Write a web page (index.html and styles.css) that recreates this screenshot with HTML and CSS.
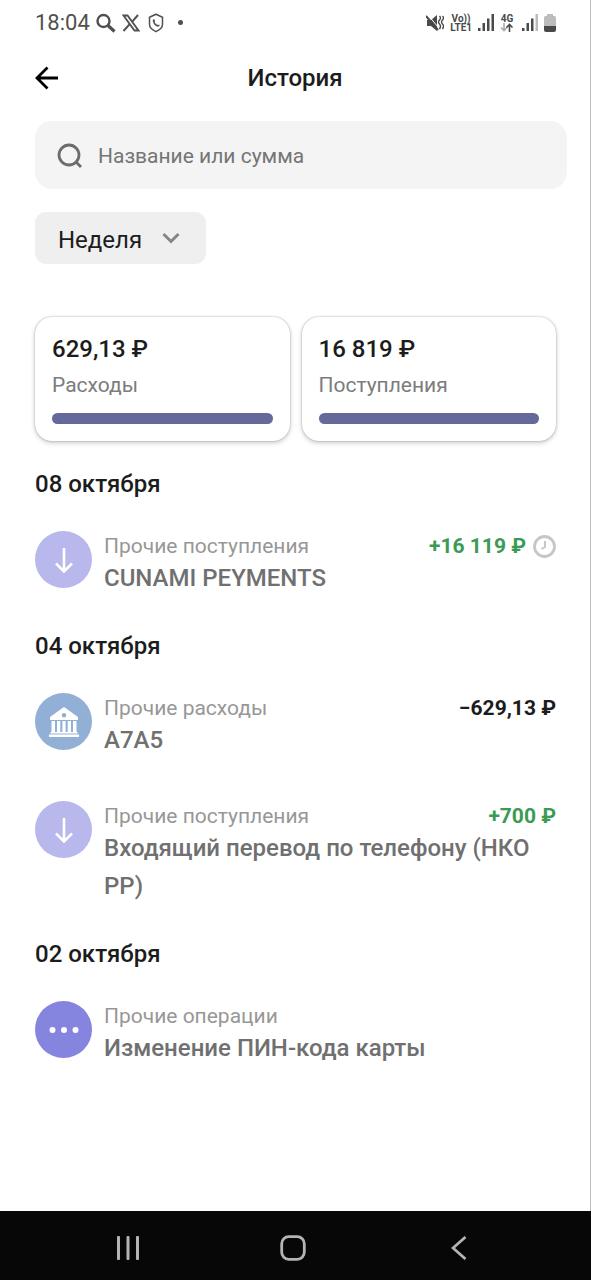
FILE: index.html
```html
<!DOCTYPE html>
<html lang="ru">
<head>
<meta charset="utf-8">
<meta name="viewport" content="width=device-width, initial-scale=1">
<title>История</title>
<link rel="stylesheet" href="styles.css">
</head>
<body>
<div class="screen">
  <div class="status">
    <div class="status-group">
      <span class="clock">18:04</span>
      <svg width="20" height="20" viewBox="0 0 20 20" fill="none" stroke="#505050"><circle cx="7.5" cy="8" r="6" stroke-width="2.4"/><path d="M12 12.5l6.500 6" stroke-width="3.200"/></svg>
      <svg width="18" height="18" viewBox="0 0 18 18" fill="none" stroke="#505050"><path d="M1.500 1.500h4l11 15h-4z" stroke-width="1.800"/><path d="M16 1L10 7.800M7.700 10.200L1.500 17" stroke-width="2"/></svg>
      <svg class="shield" width="16" height="20" viewBox="0 0 16 20" fill="none" stroke="#505050" stroke-width="1.500"><path d="M8 1.200l6.500 3v7.300c0 3-3 5.500-6.500 7.200-3.500-1.700-6.500-4.200-6.500-7.200V4.200z"/><path d="M5.700 7c0 3.500 1.800 5.500 4.600 5.900" stroke-width="1.500"/><path d="M5.800 6.400v2.200M10.500 11.700v1.600" stroke-width="2"/></svg>
      <span class="dot"></span>
    </div>
    <div class="status-group status-right">
      <svg width="18" height="18" viewBox="0 0 18 18"><path d="M1 6h4l6-5v16l-6-5H1z" fill="#4a4a4a"/><path d="M2 1l10 12" stroke="#fff" stroke-width="1"/><path d="M0 2l12 14" stroke="#4a4a4a" stroke-width="2"/><path d="M13.500 2q2 2 0 4t0 4 0 5M16.500 2q2 2 0 4t0 4 0 5" fill="none" stroke="#4a4a4a" stroke-width="1.400"/></svg>
      <span class="net"><span>Vo))</span><span>LTE1</span></span>
      <svg width="16" height="17" viewBox="0 0 16 17" fill="#4a4a4a"><path d="M0 14h2.500v3H0zM4.500 9H7v8H4.500zM9 4.500h2.500V17H9zM13.500 0H16v17h-2.500z"/></svg>
      <span class="net net-4g"><span>4G</span><svg width="14" height="9" viewBox="0 0 14 9" fill="none" stroke-width="1.600"><path d="M4 0v7M1 4.500l3 3 3-3" stroke="#aaa"/><path d="M9.500 9V1.500M6.500 4.500l3-3 3 3" stroke="#4a4a4a"/></svg></span>
      <svg width="16" height="17" viewBox="0 0 16 17" fill="#4a4a4a"><path d="M0 14h2.500v3H0zM4.500 9H7v8H4.500zM9 4.500h2.500V17H9z"/><path d="M13.500 0H16v17h-2.500z" fill="#bbb"/></svg>
      <svg width="12" height="18" viewBox="0 0 12 18"><path d="M3 0h6v2h1.500Q12 2 12 4v9H0V4q0-2 1.500-2H3z" fill="#bcbcbc"/><path d="M0 12h12v4q0 2-2 2H2q-2 0-2-2z" fill="#4a4a4a"/></svg>
    </div>
  </div>

  <header class="header">
    <button class="back" type="button" aria-label="Назад"><svg width="24" height="24" viewBox="0 0 24 24" fill="none" stroke="#000" stroke-width="2.800"><path d="M23 12H2M12.500 1.500L2 12l10.500 10.500"/></svg></button>
    <h1 class="title">История</h1>
  </header>

  <main class="main">
    <label class="search">
      <svg width="26" height="26" viewBox="0 0 26 26" fill="none" stroke="#6c6c6c" stroke-width="2.800"><circle cx="12" cy="12" r="10"/><path d="M19 19l5 5"/></svg>
      <input class="search-input" type="text" placeholder="Название или сумма" aria-label="Название или сумма">
    </label>

    <div class="period">
      <select class="period-select" aria-label="Период"><option>Неделя</option></select>
      <svg class="chevron" width="18" height="12" viewBox="0 0 18 12" fill="none" stroke="#858585" stroke-width="3"><path d="M1.500 2L9 9.500 16.500 2"/></svg>
    </div>

    <div class="cards">
      <section class="card"><div class="card-sum">629,13 ₽</div><div class="card-label">Расходы</div><div class="bar"></div></section>
      <section class="card"><div class="card-sum">16 819 ₽</div><div class="card-label">Поступления</div><div class="bar"></div></section>
    </div>

    <section class="day">
      <h2 class="date">08 октября</h2>
      <article class="row">
        <span class="badge badge-in"><svg width="20" height="26" viewBox="0 0 20 26" fill="none" stroke="#fff" stroke-width="2.600"><path d="M10 1v23M2 16.500l8 8 8-8"/></svg></span>
        <div class="info">
          <div class="line"><span class="kind">Прочие поступления</span><span class="amount plus">+16 119 ₽ <svg width="23" height="23" viewBox="0 0 23 23" fill="none" stroke="#c6c6c6"><circle cx="11.500" cy="11.500" r="10" stroke-width="2.800"/><path d="M12 6v6l-3.500 2" stroke-width="2"/></svg></span></div>
          <div class="name">CUNAMI PEYMENTS</div>
        </div>
      </article>
    </section>

    <section class="day">
      <h2 class="date">04 октября</h2>
      <article class="row">
        <span class="badge badge-bank"><svg width="30" height="32" viewBox="0 0 30 32" fill="#fff"><path fill-rule="evenodd" d="M15 1l14 10v3H1v-3zM15 7a2.300 2.300 0 100 4.600 2.300 2.300 0 000-4.600z"/><path d="M2.500 15H6v11H2.500zM8 15h3.300v11H8zM13.400 15h3.200v11h-3.200zM18.700 15H22v11h-3.300zM24 15h3.500v11H24zM1.500 26h27v1.500h-27zM0 28.500h30V31H0z"/></svg></span>
        <div class="info">
          <div class="line"><span class="kind">Прочие расходы</span><span class="amount">−629,13 ₽</span></div>
          <div class="name">A7A5</div>
        </div>
      </article>
      <article class="row">
        <span class="badge badge-in"><svg width="20" height="26" viewBox="0 0 20 26" fill="none" stroke="#fff" stroke-width="2.600"><path d="M10 1v23M2 16.500l8 8 8-8"/></svg></span>
        <div class="info">
          <div class="line"><span class="kind">Прочие поступления</span><span class="amount plus">+700 ₽</span></div>
          <div class="name">Входящий перевод по телефону (НКО РР)</div>
        </div>
      </article>
    </section>

    <section class="day">
      <h2 class="date">02 октября</h2>
      <article class="row">
        <span class="badge badge-other"><svg width="30" height="8" viewBox="0 0 30 8" fill="#fff"><circle cx="3.500" cy="4" r="3"/><circle cx="15" cy="4" r="3"/><circle cx="26.500" cy="4" r="3"/></svg></span>
        <div class="info">
          <div class="line"><span class="kind">Прочие операции</span></div>
          <div class="name">Изменение ПИН-кода карты</div>
        </div>
      </article>
    </section>
  </main>
</div>
<nav class="nav">
  <button class="nav-btn" type="button" aria-label="Недавние"><svg width="24" height="24" viewBox="0 0 24 24" fill="#b4b4b4"><rect x="1" width="3" height="24" rx="1"/><rect x="10.500" width="3" height="24" rx="1"/><rect x="20" width="3" height="24" rx="1"/></svg></button>
  <button class="nav-btn" type="button" aria-label="Домой"><svg width="26" height="26" viewBox="0 0 26 26" fill="none" stroke="#b4b4b4" stroke-width="2.800"><rect x="1.700" y="1.700" width="22.600" height="22.600" rx="7"/></svg></button>
  <button class="nav-btn" type="button" aria-label="Назад"><svg width="16" height="24" viewBox="0 0 16 24" fill="none" stroke="#b4b4b4" stroke-width="2.800"><path d="M14.500 1L2 12l12.500 11"/></svg></button>
</nav>
</body>
</html>
```
FILE: styles.css
```css
* { box-sizing: border-box; }
body {
  margin: 0;
  min-height: 100vh;
  display: flex;
  flex-direction: column;
  background: #fff;
  color: #1c1c1c;
  font-family: Roboto, "Noto Sans", sans-serif;
}
svg { display: block; flex: none; }
button, input, select { font-family: inherit; border: 0; padding: 0; background: none; }
h1, h2 { margin: 0; font-weight: 500; }
.screen { flex: 1; border-right: 1px solid #bebebe; }

.status {
  display: flex;
  justify-content: space-between;
  align-items: center;
  height: 45px;
  padding: 0 34px 0 35px;
}
.status-group { display: flex; align-items: center; gap: 6px; }
.clock { font-size: 22px; line-height: 26px; color: #505050; }
.shield { margin-left: 2px; }
.dot { width: 5px; height: 5px; margin-left: 8px; border-radius: 50%; background: #505050; }
.net {
  display: flex;
  flex-direction: column;
  align-items: center;
  font-size: 10px;
  line-height: 9px;
  font-weight: 700;
  color: #4a4a4a;
}
.net-4g { margin-right: 2px; }

.header {
  display: grid;
  grid-template-columns: 24px 1fr 24px;
  align-items: center;
  height: 66px;
  padding: 0 35px;
}
.back { width: 24px; height: 24px; }
.title { text-align: center; font-size: 24px; line-height: 34px; }

.main { padding: 10px 34px 40px 35px; }
.search {
  display: flex;
  align-items: center;
  gap: 15px;
  height: 68px;
  margin-right: -11px;
  padding: 2px 22px 0;
  border-radius: 17px;
  background: #f4f4f4;
}
.search-input { flex: 1; min-width: 0; font-size: 21px; line-height: 32px; outline: 0; }
.search-input::placeholder { color: #757575; opacity: 1; }
.period {
  display: inline-grid;
  align-items: center;
  margin-top: 23px;
  vertical-align: top;
}
.period-select, .chevron { grid-area: 1 / 1; }
.period-select {
  appearance: none;
  width: 171px;
  height: 52px;
  padding: 3px 64px 0 23px;
  border-radius: 11px;
  background: #efefef;
  color: #1c1c1c;
  font-size: 24px;
}
.chevron { justify-self: end; margin-right: 26px; pointer-events: none; }

.cards { display: grid; grid-template-columns: 1fr 1fr; gap: 12px; margin-top: 53px; }
.card {
  padding: 15px 17px 17px;
  border-radius: 17px;
  background: #fff;
  box-shadow: 0 0 2px rgba(0, 0, 0, .3), 0 2px 5px rgba(0, 0, 0, .2);
}
.card-sum { font-size: 24px; line-height: 34px; font-weight: 500; }
.card-label { margin-top: 5px; font-size: 21px; line-height: 28px; color: #7c7c7c; }
.bar { height: 11px; margin-top: 14px; border-radius: 6px; background: #65689a; }

.day { margin-top: 26px; }
.day + .day { margin-top: 32px; }
.date { font-size: 24px; line-height: 34px; }
.row { display: flex; gap: 12px; margin-top: 30px; }
.row + .row { margin-top: 42px; }
.badge {
  flex: none;
  display: grid;
  place-items: center;
  width: 57px;
  height: 57px;
  border-radius: 50%;
}
.badge-in { background: #b8b8ec; }
.badge-bank { background: #92b0d6; }
.badge-other { background: #8585df; }
.info { flex: 1; min-width: 0; padding-top: 2px; }
.line { display: flex; justify-content: space-between; align-items: center; line-height: 26px; }
.kind { font-size: 21px; color: #979797; }
.amount { display: flex; align-items: center; gap: 7px; font-size: 21px; font-weight: 700; }
.plus { color: #3b9b55; }
.name { font-size: 24px; line-height: 38px; font-weight: 500; color: #707070; }

.nav {
  display: flex;
  justify-content: space-around;
  align-items: center;
  height: 69px;
  padding: 4px 49px 0 45px;
  background: #070707;
}
.nav-btn { display: grid; place-items: center; width: 48px; height: 48px; }
```
